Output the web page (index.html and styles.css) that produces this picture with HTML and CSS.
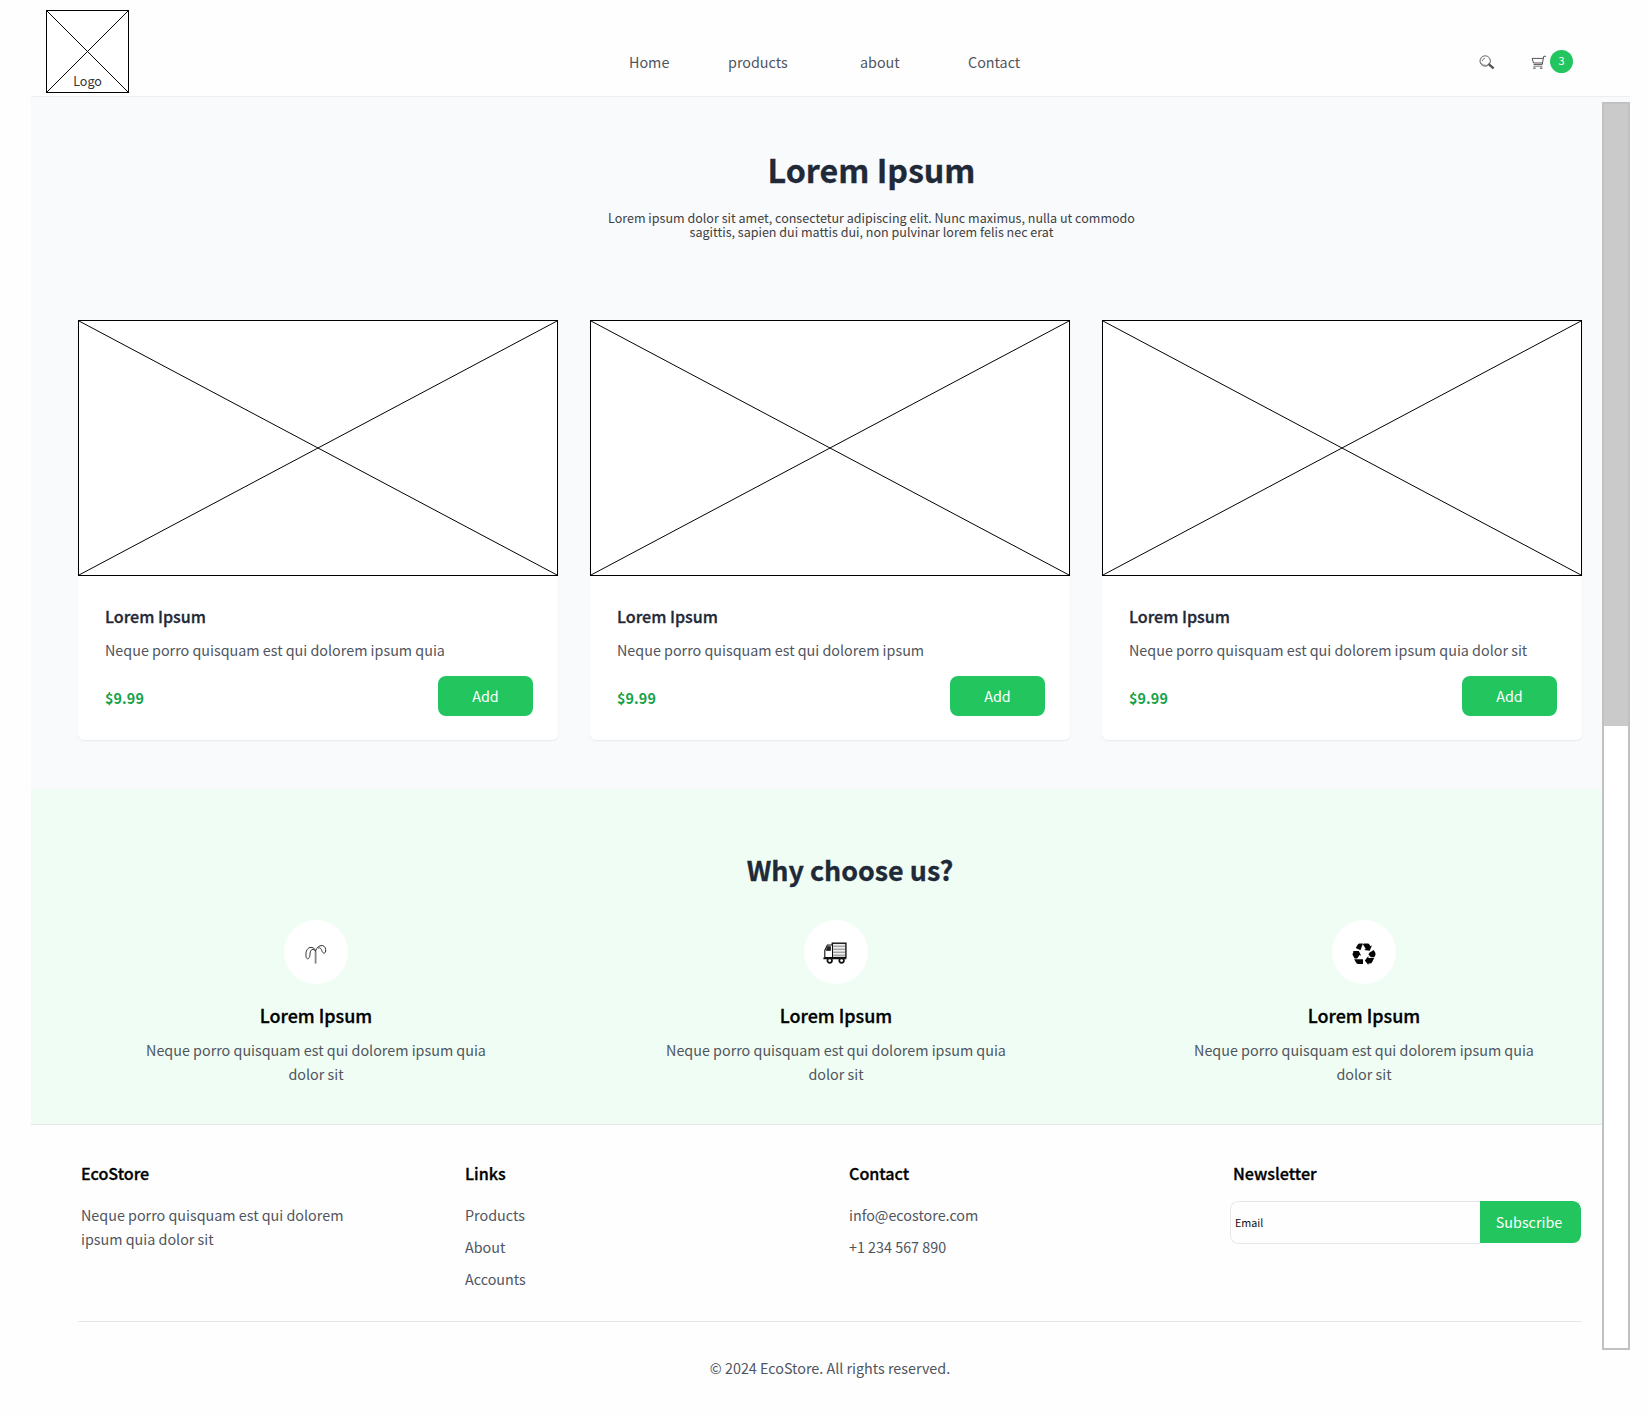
FILE: index.html
```
<!DOCTYPE html>
<html lang="en">
<head>
<meta charset="utf-8">
<title>EcoStore</title>
<link rel="stylesheet" href="styles.css">
</head>
<body>
<div class="app">
  <header class="header">
    <div class="logo">
      <svg class="cross" viewBox="0 0 83 83" preserveAspectRatio="none"><path d="M0 0L83 83M83 0L0 83"/></svg>
      <span class="logo-text">Logo</span>
    </div>
    <nav class="nav"><a>Home</a><a>products</a><a>about</a><a>Contact</a></nav>
    <div class="actions">
      <svg class="icon" width="16" height="16" viewBox="0 0 16 16">
        <circle cx="6.2" cy="6" r="5.2" fill="none" stroke="#666" stroke-width="1"/>
        <path d="M3.3 6.2Q3.5 3.6 6 3.2" fill="none" stroke="#777" stroke-width=".9"/>
        <path d="M2 8Q3.8 10.6 7.2 10.4Q9.6 10 10.2 7.6" fill="none" stroke="#777" stroke-width=".8"/>
        <path d="M9.6 9.4L10.8 9L15 12.6L13.9 13.9L10 10.6Z" fill="#555" stroke="#444" stroke-width=".7"/>
      </svg>
      <svg class="icon" width="16" height="16" viewBox="0 0 16 16" fill="none" stroke="#555">
        <path d="M15 1.3H12.7L11.2 9.6H2.6M1 3.4H12.2M1.2 3.4L2.5 8H11.4" stroke-width="1"/>
        <path d="M2.4 11.3H11.4" stroke-width=".7"/>
        <path d="M2.2 13.2H4.6M9 13.2H11.4" stroke-width="1.3"/>
      </svg>
      <span class="badge">3</span>
    </div>
  </header>
  <div class="viewport">
    <main class="content">
      <section class="products">
        <div class="hero">
          <h1>Lorem Ipsum</h1>
          <p>Lorem ipsum dolor sit amet, consectetur adipiscing elit. Nunc maximus, nulla ut commodo<br>sagittis, sapien dui mattis dui, non pulvinar lorem felis nec erat</p>
        </div>
        <div class="cards">
          <article class="card">
            <div class="picture"><svg class="cross" viewBox="0 0 480 256" preserveAspectRatio="none"><path d="M0 0L480 256M480 0L0 256"/></svg></div>
            <div class="card-body">
              <h3>Lorem Ipsum</h3>
              <p>Neque porro quisquam est qui dolorem ipsum quia</p>
              <div class="buy"><span class="price">$9.99</span><button class="add">Add</button></div>
            </div>
          </article>
          <article class="card">
            <div class="picture"><svg class="cross" viewBox="0 0 480 256" preserveAspectRatio="none"><path d="M0 0L480 256M480 0L0 256"/></svg></div>
            <div class="card-body">
              <h3>Lorem Ipsum</h3>
              <p>Neque porro quisquam est qui dolorem ipsum</p>
              <div class="buy"><span class="price">$9.99</span><button class="add">Add</button></div>
            </div>
          </article>
          <article class="card">
            <div class="picture"><svg class="cross" viewBox="0 0 480 256" preserveAspectRatio="none"><path d="M0 0L480 256M480 0L0 256"/></svg></div>
            <div class="card-body">
              <h3>Lorem Ipsum</h3>
              <p>Neque porro quisquam est qui dolorem ipsum quia dolor sit</p>
              <div class="buy"><span class="price">$9.99</span><button class="add">Add</button></div>
            </div>
          </article>
        </div>
      </section>
      <section class="why">
        <h2>Why choose us?</h2>
        <div class="features">
          <div class="feature">
            <div class="disc">
              <svg width="24" height="24" viewBox="0 0 24 24" fill="none" stroke="#333" stroke-width="1">
                <path d="M11.2 21.5V9.5M12 21.5V9.5" stroke-width=".6"/>
                <path d="M11.5 9.5C11.3 6.2 8.8 5 6 5.5C2.5 6.3 1.3 11 2.2 15.5C3.2 18 5.2 16.6 5.7 14.4C6.4 11.4 5.6 7.6 9 7.4C10.4 7.4 11.2 8.3 11.5 9.5"/>
                <path d="M11.7 8.8C12.8 5.5 15 3.4 18.2 3.5C21 3.8 22.3 7 21.5 10C20.6 12 18.6 11 18 9.2C17.3 7 16.5 5 14.2 6.2"/>
              </svg>
            </div>
            <h3>Lorem Ipsum</h3>
            <p>Neque porro quisquam est qui dolorem ipsum quia<br>dolor sit</p>
          </div>
          <div class="feature">
            <div class="disc disc-truck">
              <svg width="24" height="22" viewBox="0 0 24 22" fill="none" stroke="#111">
                <rect x="9.3" y="1.2" width="13.6" height="14.4" fill="#eee" stroke-width="1.4"/>
                <path d="M10 4.2H22.4M10 7.2H22.4M10 10.2H22.4M10 13.2H22.4" stroke="#777" stroke-width=".9"/>
                <path d="M9 3H4.4L1.8 8.4V15.6H9" fill="#fff" stroke-width="1.1"/>
                <path d="M4.6 4.4H7.6V8.5H3.2Z" fill="#222" stroke-width=".6"/>
                <path d="M.4 16.4H23.2" stroke-width="1.7"/>
                <circle cx="6.7" cy="18.6" r="2.3" fill="#fff" stroke-width="1.7"/>
                <circle cx="18.6" cy="18.6" r="2.3" fill="#fff" stroke-width="1.7"/>
              </svg>
            </div>
            <h3>Lorem Ipsum</h3>
            <p>Neque porro quisquam est qui dolorem ipsum quia<br>dolor sit</p>
          </div>
          <div class="feature">
            <div class="disc">
              <svg width="24" height="22" viewBox="0 0 24 22" fill="#050505">
                <path d="M7.6 .6H11L8.4 7.2L3.8 4.9L5.6 1.8Q6.4 .6 7.6 .6Z"/>
                <path d="M11.8 .6H15.6Q16.9 .6 17.6 1.8L18.4 3.2L20 2.3L17.7 7.8L12 7.1L13.8 6L11 1.5Z"/>
                <path d="M17.6 9.5L21.8 7L23.4 10Q23.9 11.4 23.2 12.6L22.3 14.2H18.8L16.4 11.2Z"/>
                <path d="M22.2 15L20.3 18.8Q19.7 20.4 18.2 20.4H16.4V22L12.8 17.4L16.4 13V15Z"/>
                <path d="M.8 8H6.8L9.2 12.8L7.5 12L5.2 15.5H2.6L.8 12.3Q.2 11.2 .8 10.2L1.6 8.8Z"/>
                <path d="M2.2 16.2H11V20.9H6Q4.6 20.8 4 19.5Z"/>
              </svg>
            </div>
            <h3>Lorem Ipsum</h3>
            <p>Neque porro quisquam est qui dolorem ipsum quia<br>dolor sit</p>
          </div>
        </div>
      </section>
      <footer class="footer">
        <div class="columns">
          <div><h4>EcoStore</h4><p>Neque porro quisquam est qui dolorem<br>ipsum quia dolor sit</p></div>
          <div><h4>Links</h4><ul><li>Products</li><li>About</li><li>Accounts</li></ul></div>
          <div><h4>Contact</h4><ul><li>info@ecostore.com</li><li>+1 234 567 890</li></ul></div>
          <div>
            <h4>Newsletter</h4>
            <form class="subscribe"><span class="email">Email</span><button type="button">Subscribe</button></form>
          </div>
        </div>
        <p class="copyright">© 2024 EcoStore. All rights reserved.</p>
      </footer>
    </main>
    <div class="scrollbar"><div class="thumb"></div></div>
  </div>
</div>
</body>
</html>
```
FILE: styles.css
```
* { box-sizing: border-box; }
body, h1, h2, h3, h4, p, ul { margin: 0; padding: 0; }
body {
  background: #fefefe;
  color: #4f555e;
  font: 14.33px/24px "Noto Sans CJK SC", "Noto Sans", sans-serif;
}
ul { list-style: none; }
button { border: 0; padding: 0; background: #22c55e; color: #fff; font: inherit; }

.app { width: 1599px; min-height: 1416px; margin-left: 31px; }

.header {
  display: grid;
  grid-template-columns: 598px 1fr 151px;
  height: 97px;
  border-bottom: 1px solid #eceef0;
}
.logo {
  position: relative;
  width: 83px;
  height: 83px;
  margin: 10px 0 0 15px;
  border: 1px solid #000;
  background: #fff;
}
.cross { display: block; width: 100%; height: 100%; fill: none; stroke: #000; stroke-width: 1; }
.logo-text {
  position: absolute;
  left: 0;
  right: 0;
  bottom: 1px;
  text-align: center;
  color: #333;
  font-size: 12.54px;
  line-height: 20px;
}
.nav {
  display: grid;
  grid-template-columns: 99px 132px 108px 60px;
  align-content: start;
  padding-top: 50px;
}
.actions { display: flex; align-items: flex-start; padding-top: 50px; }
.icon { margin: 5px 36px 0 0; }
.icon + .icon { margin-right: 3px; }
.badge {
  width: 23px;
  height: 23px;
  border-radius: 50%;
  background: #22c55e;
  color: #fff;
  font-size: 10.75px;
  line-height: 22px;
  text-align: center;
}

.viewport { display: flex; background: linear-gradient(#f9fafc 5px, transparent 5px); }
.content { width: 1571px; }
.products { padding: 52px 20px 49px 47px; background: #f9fafc; }
.hero { padding-left: 83px; text-align: center; }
.hero h1, .why h2 { color: #1f2937; font-weight: 700; -webkit-text-stroke: .3px currentColor; }
.hero h1 { font-size: 32.24px; line-height: 40px; }
.hero p { margin-top: 22px; color: #404040; font-size: 12.54px; line-height: 14px; }
.cards { display: grid; grid-template-columns: repeat(3, 480px); gap: 32px; margin-top: 81px; }
.card { background: #fff; border-radius: 0 0 6px 6px; box-shadow: 0 1px 2px rgba(0, 0, 0, .07); }
.picture { height: 256px; border: 1px solid #000; }
.card-body { padding: 26px 25px 24px 27px; }
.card-body h3, .feature h3, .columns h4 { font-weight: 500; -webkit-text-stroke: .3px currentColor; }
.card-body h3 { color: #1f2937; font-size: 16.12px; line-height: 28px; }
.card-body p { margin-top: 8px; }
.buy { display: flex; justify-content: space-between; align-items: center; margin-top: 14px; }
.price { padding-top: 4px; color: #16a34a; font-weight: 700; letter-spacing: .1px; }
.add { width: 95px; height: 40px; border-radius: 8px; }

.why { height: 335px; padding-top: 63px; background: #effdf4; }
.why h2 { padding-left: 67px; font-size: 26.87px; line-height: 36px; text-align: center; }
.features { display: grid; grid-template-columns: 520px 528px 400px; margin: 32px 0 0 85px; }
.feature { width: 400px; text-align: center; }
.disc {
  display: flex;
  align-items: center;
  justify-content: center;
  width: 64px;
  height: 64px;
  margin: 0 auto 17px;
  padding-top: 4px;
  border-radius: 50%;
  background: #fff;
}
.disc-truck { padding: 2px 2px 0 0; }
.feature h3 { color: #000; font-size: 17.91px; line-height: 28px; }
.feature p { margin-top: 9px; }

.footer { padding: 34px 20px 0 47px; border-top: 1px solid #e5e7eb; }
.columns {
  display: grid;
  grid-template-columns: 384px 384px 381px 1fr;
  height: 163px;
  padding-left: 3px;
  border-bottom: 1px solid #e5e7eb;
}
.columns h4 { margin-bottom: 16px; color: #000; font-size: 16.12px; line-height: 28px; }
.columns li { margin-bottom: 8px; }
.columns div:last-child h4 { margin-left: 3px; margin-bottom: 14px; }
.subscribe { display: flex; width: 351px; height: 43px; border-radius: 8px; overflow: hidden; }
.email {
  flex: 1;
  padding-left: 4px;
  border: 1px solid #e5e7eb;
  border-right: 0;
  border-radius: 8px 0 0 8px;
  color: #111;
  font-size: 10.75px;
  line-height: 42px;
}
.subscribe button { width: 101px; height: 42px; padding-right: 3px; border-radius: 0 8px 8px 0; }
.copyright { margin-top: 34px; text-align: center; }

.scrollbar {
  width: 28px;
  height: 1248px;
  margin-top: 5px;
  border: 2px solid #c0c1c2;
  background: #fff;
}
.thumb { height: 622px; background: #cacaca; }
```
